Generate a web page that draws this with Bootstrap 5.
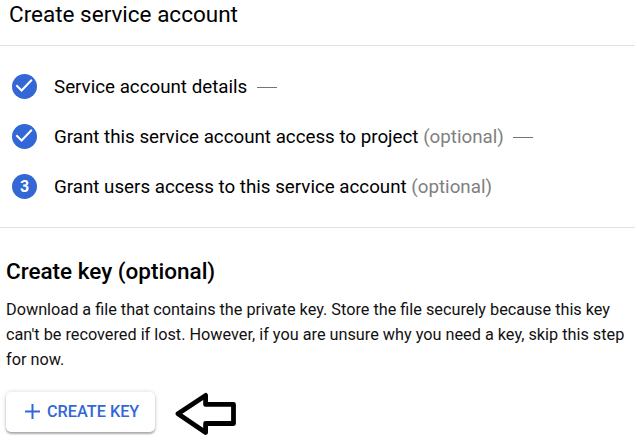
<!DOCTYPE html>
<html lang="en">
<head>
<meta charset="utf-8">
<meta name="viewport" content="width=device-width, initial-scale=1">
<title>Create service account</title>
<link href="https://cdn.jsdelivr.net/npm/bootstrap@5.3.0/dist/css/bootstrap.min.css" rel="stylesheet">
<style>
body{font-family:Roboto,"Liberation Sans",sans-serif;color:#000;background:#fff;overflow:hidden}
.page{width:635px}
.page-head{height:46px;padding:0 0 17px 9px;border-bottom:1px solid #e0e0e0}
.page-title{font-size:22.5px;line-height:28px;font-weight:400}
.steps{height:182px;padding:15px 0 0 12px;border-bottom:1px solid #e0e0e0}
.step{height:50px}
.step-dot{width:25px;height:25px;margin-right:17px;background:#3367d6;color:#fff;font-size:16px;font-weight:700;line-height:25px}
.step-label{font-size:18.75px;line-height:26px;padding-top:2px;white-space:pre}
.step-note{color:#808080}
.step-dash{width:20px;height:1px;margin:2px 0 0 9.5px;background:#757575}
.key-section{padding:29px 0 0 6px}
.key-title{font-size:22.5px;line-height:28px;font-weight:500;margin-bottom:12px}
.key-text{font-size:16.25px;line-height:25px;color:#111;white-space:nowrap;margin-bottom:19px}
.btn-key{width:149px;height:40px;margin-top:1px;padding:0 0 0 18px;border:0;border-radius:5px;background:#fff;color:#3367d6;font-size:16.25px;font-weight:500;box-shadow:0 2px 2px rgba(0,0,0,.28),0 0 4px rgba(0,0,0,.16)}
.plus{margin-right:7px}
.arrow{margin-left:20px}
</style>
<script src="https://cdn.jsdelivr.net/npm/bootstrap@5.3.0/dist/js/bootstrap.bundle.min.js"></script>
</head>
<body>
<main class="page">
  <header class="page-head"><h1 class="page-title mb-0">Create service account</h1></header>
  <ol class="steps list-unstyled mb-0">
    <li class="step d-flex align-items-center">
      <span class="step-dot rounded-circle flex-shrink-0"><svg class="d-block" width="25" height="25" viewBox="0 0 25 25" fill="none" stroke="#fff" stroke-width="2"><path d="M4.3 11.3 9.6 16.5 19.8 5.8"/></svg></span>
      <span class="step-label">Service account details</span><span class="step-dash"></span>
    </li>
    <li class="step d-flex align-items-center">
      <span class="step-dot rounded-circle flex-shrink-0"><svg class="d-block" width="25" height="25" viewBox="0 0 25 25" fill="none" stroke="#fff" stroke-width="2"><path d="M4.3 11.3 9.6 16.5 19.8 5.8"/></svg></span>
      <span class="step-label">Grant this service account access to project <span class="step-note">(optional)</span></span><span class="step-dash"></span>
    </li>
    <li class="step d-flex align-items-center">
      <span class="step-dot rounded-circle flex-shrink-0 text-center">3</span>
      <span class="step-label">Grant users access to this service account <span class="step-note">(optional)</span></span>
    </li>
  </ol>
  <section class="key-section">
    <h2 class="key-title">Create key (optional)</h2>
    <p class="key-text">Download a file that contains the private key. Store the file securely because this key<br>can't be recovered if lost. However, if you are unsure why you need a key, skip this step<br>for now.</p>
    <div class="d-flex align-items-start">
      <button type="button" class="btn btn-key d-flex align-items-center"><svg class="plus" width="16" height="16" viewBox="0 0 16 16" fill="none" stroke="currentColor" stroke-width="2"><path d="M8.5 0v15M1 7.5h15"/></svg>CREATE KEY</button>
      <svg class="arrow" width="62" height="45" viewBox="0 0 62 45" fill="none" stroke="#000" stroke-width="4.8" stroke-linejoin="round"><path d="M3 22.7 30.6 4.4V13.4H58.5V32.5H30.6V41.5Z"/></svg>
    </div>
  </section>
</main>
</body>
</html>
